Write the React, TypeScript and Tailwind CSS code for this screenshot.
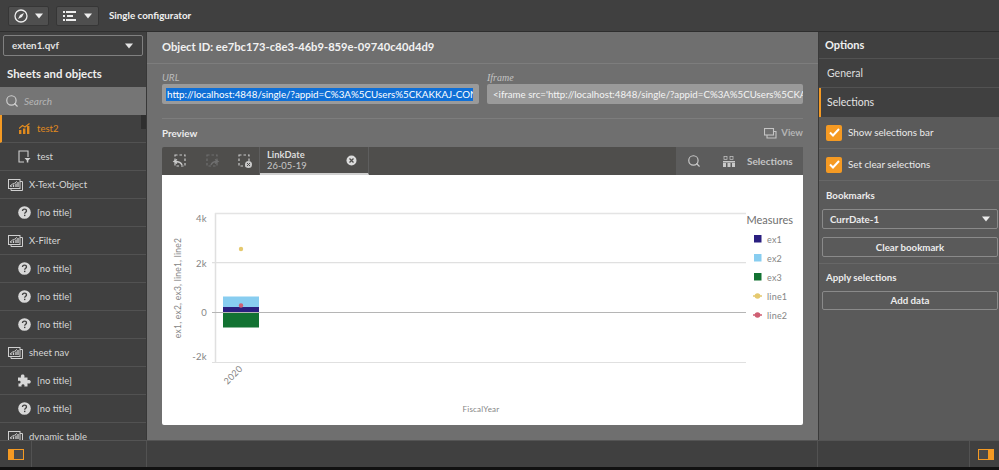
import React from 'react';
import { Search } from 'lucide-react';

const font = { fontFamily: 'Lato, "Noto Sans", sans-serif' };

function Caret({ className = '' }: { className?: string }) {
  return (
    <svg width="8" height="6" viewBox="0 0 8 6" className={className}>
      <path d="M0 0.5h8L4 5.5z" fill="currentColor" />
    </svg>
  );
}

function CompassIcon() {
  return (
    <svg width="14" height="14" viewBox="0 0 14 14">
      <circle cx="7" cy="7" r="6" fill="none" stroke="#eee" strokeWidth="1.300" />
      <path d="M10 4L8 8 4 10 6 6z" fill="#eee" />
    </svg>
  );
}

function ListIcon() {
  return (
    <svg width="13" height="10" viewBox="0 0 13 10" fill="#eee">
      <rect x="0" y="0" width="2" height="2" />
      <rect x="3" y="0" width="10" height="2" />
      <rect x="0" y="4" width="2" height="2" />
      <rect x="4" y="4" width="6" height="2" />
      <rect x="0" y="8" width="2" height="2" />
      <rect x="3" y="8" width="10" height="2" />
    </svg>
  );
}

function ComboIcon() {
  return (
    <svg width="11" height="11" viewBox="0 0 11 11" fill="#e08a1e">
      <rect x="0" y="7" width="2.4" height="4" />
      <rect x="4" y="5.5" width="2.4" height="5.5" />
      <rect x="8" y="3" width="2.4" height="8" />
      <path d="M0 5.5L3.5 2.5 6 4 10.5 0.5" fill="none" stroke="#e08a1e" strokeWidth="1.2" />
    </svg>
  );
}

function SheetIcon() {
  return (
    <svg width="13" height="13" viewBox="0 0 13 13" fill="none" stroke="#d0d0d0" strokeWidth="1.1">
      <path d="M6 12H1V1h9v6" />
      <path d="M6.5 8h6l-2.2 2.4V12.5H8.8v-2.1z" fill="#d0d0d0" stroke="none" />
    </svg>
  );
}

function GroupIcon() {
  return (
    <svg width="15" height="12" viewBox="0 0 15 12" fill="none" stroke="#cfcfcf" strokeWidth="1">
      <path d="M12 2.5h2.5v9H3V9.5" />
      <rect x="0.5" y="0.5" width="11.5" height="9" />
      <path d="M2 7l2.5-2 2-0.7 2.500-2" strokeWidth="0.9" />
      <path d="M3 8V6.500M5.500 8V5.500M8 8V4.500M10 8V3" strokeWidth="1.300" />
    </svg>
  );
}

function QuestionIcon() {
  return (
    <svg width="13" height="13" viewBox="0 0 13 13">
      <circle cx="6.500" cy="6.500" r="6.300" fill="#d8d8d8" />
      <path d="M4.500 5.100C4.500 3.900 5.400 3.200 6.500 3.200S8.500 3.900 8.500 5C8.500 6.300 6.700 6.400 6.700 7.800" fill="none" stroke="#404040" strokeWidth="1.300" />
      <rect x="6" y="8.700" width="1.400" height="1.400" fill="#404040" />
    </svg>
  );
}

function PuzzleIcon() {
  return (
    <svg width="13" height="13" viewBox="0 0 13 13" fill="#d8d8d8">
      <path d="M0 3.500h3.200C2.600 2.800 2.600 0.500 4.700 0.500S6.800 2.800 6.200 3.500H9.500V6.200C10.300 5.600 12.800 5.700 12.800 7.700S10.300 9.800 9.500 9.200V12.500H6.300C6.800 11.500 6.500 10.300 5 10.300S3.200 11.500 3.700 12.500H0.500V9.300C1.500 9.800 2.600 9.400 2.600 8S1 6.300 0 7z" />
    </svg>
  );
}

function Row({
  icon,
  label,
  indent,
  active,
  scrollThumb,
}: {
  icon: React.ReactNode;
  label: string;
  indent?: boolean;
  active?: boolean;
  scrollThumb?: boolean;
}) {
  return (
    <div
      className={`relative h-[28px] shrink-0 flex items-center border-b border-[#525252] text-[9.500px] ${
        active ? 'text-[#e08a1e] border-l-2 border-l-[#f59a23]' : 'text-[#d6d6d6]'
      } ${indent ? (active ? 'pl-[16px]' : 'pl-[18px]') : 'pl-[8px]'}`}
    >
      <span className={`flex justify-center mr-[6px] ${indent ? 'w-[13px]' : 'w-[15px]'}`}>{icon}</span>
      <span className="pt-px">{label}</span>
      {scrollThumb && <span className="absolute right-0 top-0 w-[5px] h-[14px] bg-[#2f2f2f]" />}
    </div>
  );
}

function SidePanelIcon({ side }: { side: 'left' | 'right' }) {
  return (
    <div className="w-[16px] h-[11px] bg-[#f59a23] flex p-[1px]">
      <div className={`w-[9px] h-full bg-[#4a4a4a] ${side === 'left' ? 'ml-auto' : ''}`} />
    </div>
  );
}

function Chart() {
  const label = 'fill-[#858585]';
  const legend = [
    { name: 'ex1', y: 64, color: '#2a1f80' },
    { name: 'ex2', y: 83, color: '#88cdf0' },
    { name: 'ex3', y: 102, color: '#127232' },
  ];
  return (
    <svg width="641" height="250" viewBox="0 0 641 250" style={{ fontFamily: 'Lato, sans-serif' }}>
      <line x1="53.500" y1="38" x2="53.500" y2="188" stroke="#e0e0e0" strokeWidth="1.500" />
      <line x1="53" y1="38.500" x2="584" y2="38.500" stroke="#e4e4e4" strokeWidth="1.500" />
      <line x1="50" y1="87.700" x2="584" y2="87.700" stroke="#e0e0e0" strokeWidth="1.300" />
      <line x1="50" y1="187.500" x2="584" y2="187.500" stroke="#e0e0e0" />

      <rect x="61" y="121.500" width="36" height="10.500" fill="#88cdf0" />
      <rect x="61" y="132" width="36" height="5.500" fill="#2a1f80" />
      <rect x="61" y="137.500" width="36" height="15" fill="#127232" />
      <line x1="50" y1="137.500" x2="584" y2="137.500" stroke="#b5b5b5" strokeWidth="1.200" />
      <circle cx="79" cy="74" r="2.200" fill="#e5c96f" />
      <circle cx="79" cy="130.500" r="2.200" fill="#cf5f73" />

      <g className={label} fontSize="9.500" letterSpacing="0.300" textAnchor="end">
        <text x="45" y="47">4k</text>
        <text x="45" y="92">2k</text>
        <text x="45" y="141">0</text>
        <text x="45" y="185">-2k</text>
      </g>
      <text
        transform="translate(19 113) rotate(-90)"
        textAnchor="middle"
        fontSize="8.500"
        letterSpacing="0.250"
        className={label}
      >
        ex1, ex2, ex3, line1, line2
      </text>
      <text transform="translate(65.500 210) rotate(-45)" fontSize="9" letterSpacing="0.300" className={label}>
        2020
      </text>
      <text x="319" y="237" textAnchor="middle" fontSize="8" letterSpacing="0.200" className={label}>
        FiscalYear
      </text>

      <text x="584.500" y="49" fontSize="11" fill="#6e6e6e">Measures</text>
      {legend.map((l) => (
        <g key={l.name}>
          <rect x="592" y={l.y - 4} width="7.500" height="7.500" fill={l.color} />
          <text x="605" y={l.y + 3.500} fontSize="9" letterSpacing="0.200" className={label}>{l.name}</text>
        </g>
      ))}
      <line x1="591" y1="121" x2="600" y2="121" stroke="#e5c96f" strokeWidth="1.500" />
      <circle cx="595.500" cy="121" r="2.800" fill="#e5c96f" />
      <text x="605" y="124.500" fontSize="9" letterSpacing="0.200" className={label}>line1</text>
      <line x1="591" y1="140" x2="600" y2="140" stroke="#cf5f73" strokeWidth="1.500" />
      <circle cx="595.500" cy="140" r="2.800" fill="#cf5f73" />
      <text x="605" y="143.500" fontSize="9" letterSpacing="0.200" className={label}>line2</text>
    </svg>
  );
}

function BackIcon({ dim, clear }: { dim?: boolean; clear?: boolean }) {
  const c = dim ? '#6f6f6f' : '#c9c9c9';
  return (
    <svg width="16" height="15" viewBox="0 0 16 15" fill="none" stroke={c} strokeWidth="1.200">
      <rect x="3" y="1" width="10" height="11" strokeDasharray="2.500 2" />
      {clear ? (
        <g>
          <circle cx="12.500" cy="10.500" r="3.500" fill="#c9c9c9" stroke="none" />
          <path d="M11 9l3 3M14 9l-3 3" stroke="#4d4d4d" strokeWidth="1" />
        </g>
      ) : dim ? (
        <path d="M7 11c1-3 3-3.500 6-3.500M11 5.500l3 2-3 2" strokeWidth="1.500" />
      ) : (
        <path d="M10 11c-1-3-3-3.500-7-3.500M5 5.500l-3 2 3 2" strokeWidth="1.500" />
      )}
    </svg>
  );
}

export default function App() {
  return (
    <div className="w-[999px] h-[470px] flex flex-col overflow-hidden bg-[#404040] text-white" style={font}>
      {/* top bar */}
      <div className="h-[32px] shrink-0 flex items-center bg-[#404040] border-b border-[#2e2e2e] pl-[8px]">
        <button className="w-[41px] h-[20px] flex items-center justify-center gap-[7px] rounded-[2px] bg-[#4f4f4f] border border-[#363636] text-[#eee]">
          <CompassIcon />
          <Caret />
        </button>
        <button className="w-[43px] h-[20px] ml-[7px] flex items-center justify-center gap-[8px] rounded-[2px] bg-[#4f4f4f] border border-[#363636] text-[#eee]">
          <ListIcon />
          <Caret />
        </button>
        <span className="ml-[10px] text-[9.800px] font-bold text-[#f0f0f0]">Single configurator</span>
      </div>

      <div className="flex-1 min-h-0 flex">
        {/* left panel */}
        <aside className="w-[147px] shrink-0 flex flex-col bg-[#404040] border-r border-[#383838] overflow-hidden">
          <div className="h-[27px] shrink-0 pl-[3px] pr-[3px] pt-[3px]">
            <div className="h-[21px] flex items-center justify-between rounded-[2px] border border-[#808080] pl-[8px] pr-[9px] text-[9.800px] font-bold text-[#e4e4e4]">
              exten1.qvf
              <Caret />
            </div>
          </div>
          <div className="h-[28px] shrink-0 flex items-center pl-[7px] pt-[2px] text-[11.400px] font-bold text-[#efefef]">Sheets and objects</div>
          <div className="h-[28px] shrink-0 flex items-center bg-[#757575] pl-[5px] gap-[5px]">
            <Search size={14} strokeWidth={2} className="text-[#d0d0d0]" />
            <span className="pt-px text-[10px] italic text-[#b5b5b5]">Search</span>
          </div>
          <Row icon={<ComboIcon />} label="test2" indent active scrollThumb />
          <Row icon={<SheetIcon />} label="test" indent />
          <Row icon={<GroupIcon />} label="X-Text-Object" />
          <Row icon={<QuestionIcon />} label="[no title]" indent />
          <Row icon={<GroupIcon />} label="X-Filter" />
          <Row icon={<QuestionIcon />} label="[no title]" indent />
          <Row icon={<QuestionIcon />} label="[no title]" indent />
          <Row icon={<QuestionIcon />} label="[no title]" indent />
          <Row icon={<GroupIcon />} label="sheet nav" />
          <Row icon={<PuzzleIcon />} label="[no title]" indent />
          <Row icon={<QuestionIcon />} label="[no title]" indent />
          <Row icon={<GroupIcon />} label="dynamic table" />
        </aside>

        {/* center */}
        <main className="w-[671px] shrink-0 flex flex-col bg-[#6f6f6f] px-[15px]">
          <div className="h-[32px] -mx-[15px] px-[15px] shrink-0 flex items-center border-b border-[#7d7d7d] text-[11.200px] font-bold text-[#f2f2f2]">
            Object ID: ee7bc173-c8e3-46b9-859e-09740c40d4d9
          </div>
          <div className="flex gap-[8px] pt-[7px] pb-[14px] border-b border-[#7d7d7d]">
            <label className="w-[317px] flex flex-col">
              <span className="h-[13px] text-[10px] italic leading-[13px] text-[#b9b9b9]">URL</span>
              <div className="h-[20px] rounded-[2px] bg-[#9a9a9a] flex items-center px-[4px] text-[9.800px] leading-[13px] text-white overflow-hidden whitespace-nowrap">
                <span className="bg-[#0f6fd6] pl-[1px] w-[307px] overflow-hidden shrink-0">http://localhost:4848/single/?appid=C%3A%5CUsers%5CKAKKAJ-CONT%</span>
              </div>
            </label>
            <label className="w-[316px] flex flex-col">
              <span className="h-[13px] text-[10px] italic leading-[13px] text-[#c4c4c4]" style={{ fontFamily: '"Liberation Serif", serif' }}>Iframe</span>
              <div className="h-[20px] rounded-[2px] bg-[#9a9a9a] flex items-center px-[6px] text-[9.700px] text-[#f4f4f4] overflow-hidden whitespace-nowrap">
                {'<iframe src=\'http://localhost:4848/single/?appid=C%3A%5CUsers%5CKA'}
              </div>
            </label>
          </div>
          <div className="h-[28px] shrink-0 flex items-center justify-between">
            <span className="text-[9.800px] font-bold text-[#ececec]">Preview</span>
            <span className="flex items-center gap-[4px] text-[9.500px] font-bold text-[#b4b4b4]">
              <svg width="13" height="11" viewBox="0 0 13 11" fill="none" stroke="#c4c4c4" strokeWidth="1.100">
                <rect x="0.500" y="0.500" width="9" height="6.500" />
                <path d="M3 7v3h9V3.500H9.500" />
              </svg>
              View
            </span>
          </div>
          <div className="flex flex-col">
            {/* selections bar */}
            <div className="h-[28px] flex items-stretch bg-[#4f4e4c] rounded-t-[2px]">
              <div className="w-[98px] flex items-center justify-center gap-[16px] pl-[2px] border-r border-[#5e5e5e]">
                <BackIcon />
                <BackIcon dim />
                <BackIcon clear />
              </div>
              <div className="w-[109px] relative flex items-center border-r border-[#5e5e5e] border-b-2 border-b-[#d0d0d0] pl-[7px]">
                <div className="flex flex-col leading-[11.500px] text-[9.400px]">
                  <span className="font-bold text-[#dcdcdc]">LinkDate</span>
                  <span className="text-[#c8c8c8]">26-05-19</span>
                </div>
                <svg width="11" height="11" viewBox="0 0 11 11" className="ml-auto mr-[11px]">
                  <circle cx="5.500" cy="5.500" r="5" fill="#dcdcdc" />
                  <path d="M3.500 3.500l4 4M7.500 3.500l-4 4" stroke="#4f4e4c" strokeWidth="1.300" />
                </svg>
              </div>
              <div className="flex-1" />
              <div className="w-[127px] flex items-center bg-[#5c5c5c] pl-[11px] text-[#c9c9c9]">
                <Search size={14} strokeWidth={2} />
                <svg width="12" height="11" viewBox="0 0 12 11" className="ml-[22px]" fill="#c9c9c9">
                  <rect x="1" y="0.500" width="3" height="3" fill="none" stroke="#c9c9c9" strokeWidth="0.700" />
                  <rect x="7" y="0.500" width="3" height="3" fill="none" stroke="#c9c9c9" strokeWidth="0.700" />
                  <rect x="0" y="5" width="12" height="1.500" />
                  <rect x="0" y="7" width="3" height="4" />
                  <rect x="4.500" y="7" width="3" height="4" />
                  <rect x="9" y="7" width="3" height="4" />
                </svg>
                <span className="ml-[12px] text-[10px] font-bold text-[#c4c4c4]">Selections</span>
              </div>
            </div>
            <div className="h-[250px] bg-white rounded-b-[2px] overflow-hidden">
              <Chart />
            </div>
          </div>
        </main>

        {/* right panel */}
        <aside className="flex-1 min-w-0 flex flex-col bg-[#5a5a5a] border-l border-[#3a3a3a]">
          <div className="h-[27px] shrink-0 flex items-center bg-[#404040] border-b border-[#525252] pl-[6px] pt-px text-[11px] font-bold text-[#f0f0f0]">Options</div>
          <div className="h-[29px] shrink-0 flex items-center bg-[#404040] border-b border-[#525252] pl-[8px] pt-px text-[10.500px] text-[#dedede]">General</div>
          <div className="h-[29px] shrink-0 flex items-center bg-[#404040] border-l-2 border-[#f59a23] pl-[6px] pt-px text-[10.500px] text-[#e4e4e4]">Selections</div>
          {['Show selections bar', 'Set clear selections'].map((t) => (
            <div key={t} className="h-[32px] shrink-0 flex items-center border-b border-[#676767] pl-[7px] gap-[6px] text-[9.800px] text-[#eaeaea]">
              <span className="w-[16px] h-[16px] rounded-[2px] bg-[#f59a23] flex items-center justify-center">
                <svg width="11" height="9" viewBox="0 0 11 9" fill="none" stroke="#fff" strokeWidth="2">
                  <path d="M1 4.500l3 3 6-6.500" />
                </svg>
              </span>
              {t}
            </div>
          ))}
          <div className="pl-[3px] pr-[1px]">
            <div className="h-[28px] flex items-center pl-[4px] pt-[1px] text-[9.700px] font-bold text-[#ececec]">Bookmarks</div>
            <div className="h-[20px] flex items-center justify-between rounded-[2px] border border-[#8a8a8a] pl-[7px] pr-[7px] text-[9.700px] font-bold text-[#ececec]">
              CurrDate-1
              <Caret />
            </div>
            <div className="h-[20px] mt-[8px] flex items-center justify-center rounded-[2px] border border-[#8a8a8a] text-[9.700px] font-bold text-[#ececec]">Clear bookmark</div>
          </div>
          <div className="mt-[6px] border-t border-[#676767] pl-[3px] pr-[1px]">
            <div className="h-[27px] flex items-center pl-[4px] text-[9.700px] font-bold text-[#ececec]">Apply selections</div>
            <div className="h-[19px] flex items-center justify-center rounded-[2px] border border-[#8a8a8a] text-[9.700px] font-bold text-[#ececec]">Add data</div>
          </div>
        </aside>
      </div>

      {/* footer */}
      <div className="h-[27px] shrink-0 flex bg-[#404040] border-t border-[#545454]">
        <div className="w-[32px] flex items-center justify-center border-r border-[#525252]">
          <SidePanelIcon side="left" />
        </div>
        <div className="w-[115px] border-r border-[#525252]" />
        <div className="w-[671px] border-r border-[#525252]" />
        <div className="flex-1 flex justify-end">
          <div className="w-[30px] flex items-center justify-center pl-[2px] border-l border-[#525252]">
            <SidePanelIcon side="right" />
          </div>
        </div>
      </div>
      <div className="h-[3px] shrink-0 bg-[#111]" />
    </div>
  );
}
